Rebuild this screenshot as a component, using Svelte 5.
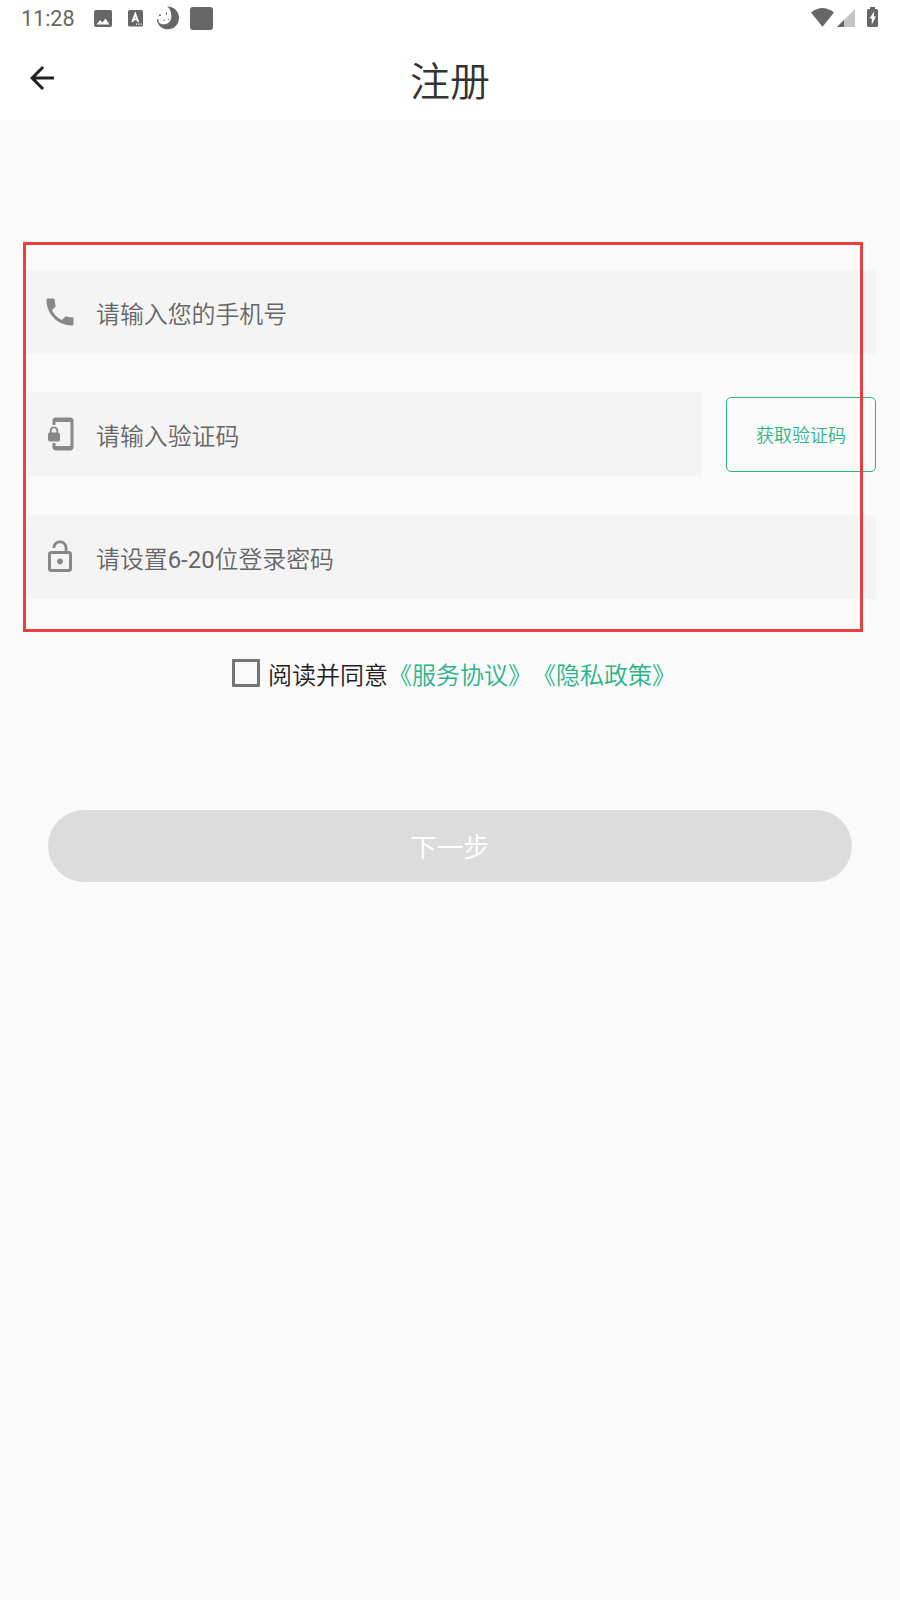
<script>
  const time = '11:28';

  let phone = '';
  let code = '';
  let password = '';
  let agreed = false;
</script>

<div class="screen">
  <header>
    <div class="status-bar">
      <span class="time">{time}</span>
      <div class="notifications">
        <svg class="image-icon" width="18" height="18" viewBox="0 0 18 18">
          <path fill="#666" fill-rule="evenodd" d="M2 0h14a2 2 0 0 1 2 2v13a2 2 0 0 1-2 2H2a2 2 0 0 1-2-2V2a2 2 0 0 1 2-2zM2.500 14.500h13L11.500 8.500 8.500 12.500 6 10z" />
        </svg>
        <svg class="letter-icon" width="15" height="17" viewBox="0 0 15 17">
          <rect width="15" height="16.500" rx="1.500" fill="#666" />
          <path d="M4.300 12 7.300 4 10.300 12M5.400 9.400h3.800" fill="none" stroke="#fff" stroke-width="1.900" />
          <path d="M8 13.500h1.200v1.200H8zM10.300 13.500h1.200v1.200h-1.200zM12.600 13.500h1.200v1.200h-1.200z" fill="#fff" />
        </svg>
        <svg class="moon-icon" width="24" height="24" viewBox="0 0 24 24">
          <path d="M11 .5C18 .2 23 5.500 23 12S18 23.300 12 23.300C6.500 23.300 2 20 1 14.500c2.500 3.500 6 4.500 9 3.500 4-1.300 5.500-4.300 5.300-8.500C15.200 5 13.600 2 11 .5z" fill="#666" />
          <path d="M3 8.500h2v1.500H3zM10 6.500h1V9h-1zM7.500 13.500h1.500v1H7.500zM12 13h1v1h-1zM1 13h1.500v3H1z" fill="#666" />
          <path d="M2 14Q-.5 9 2.500 5.500" fill="none" stroke="#bbb" stroke-width=".6" stroke-dasharray="1 2" />
        </svg>
        <span class="app-badge"></span>
      </div>
      <div class="system">
        <svg class="wifi-icon" width="23" height="19" viewBox="0 0 23 19">
          <path d="M0 4.500Q11.500-4.500 23 4.500L11.500 18.700z" fill="#666" />
        </svg>
        <svg class="signal-icon" width="18" height="18" viewBox="0 0 18 18">
          <path d="M18 0v18H0z" fill="#c4c4c4" />
          <path d="M7 11v7H0z" fill="#666" />
        </svg>
        <svg class="battery-icon" width="11" height="20" viewBox="0 0 11 20">
          <path d="M3 0h5v2h1.500A1.500 1.500 0 0 1 11 3.500v15A1.500 1.500 0 0 1 9.500 20h-8A1.500 1.500 0 0 1 0 18.500v-15A1.500 1.500 0 0 1 1.500 2H3z" fill="#666" />
          <path d="M7 4.500 2.500 11.500h2.300v6L9 9.500H7z" fill="#fff" />
        </svg>
      </div>
    </div>
    <div class="title-bar">
      <button class="back" aria-label="返回">
        <svg width="36" height="36" viewBox="0 0 24 24">
          <path d="M20 11H7.830l5.590-5.590L12 4l-8 8 8 8 1.410-1.410L7.830 13H20v-2z" fill="#212121" />
        </svg>
      </button>
      <h1>注册</h1>
    </div>
  </header>

  <main>
    <form>
      <label class="field">
        <svg width="36" height="36" viewBox="0 0 24 24">
          <path d="M6.620 10.790c1.440 2.830 3.760 5.140 6.590 6.590l2.200-2.200c.27-.27.67-.36 1.020-.24 1.120.37 2.330.57 3.570.57.55 0 1 .45 1 1V20c0 .55-.45 1-1 1-9.390 0-17-7.610-17-17 0-.55.45-1 1-1h3.500c.55 0 1 .45 1 1 0 1.250.2 2.450.57 3.570.11.35.03.74-.25 1.020l-2.200 2.200z" />
        </svg>
        <input type="text" placeholder="请输入您的手机号" bind:value={phone} />
      </label>

      <div class="code-row">
        <label class="field">
          <svg width="36" height="36" viewBox="0 0 24 24">
            <path d="M19 1H9c-1.100 0-2 .9-2 2v3h2V4h10v16H9v-2H7v3c0 1.100.9 2 2 2h10c1.100 0 2-.9 2-2V3c0-1.100-.9-2-2-2zm-8.200 10V9.500C10.800 8.100 9.400 7 8 7S5.200 8.100 5.200 9.500V11c-.6 0-1.200.6-1.200 1.200v3.500c0 .7.6 1.300 1.200 1.300h5.500c.7 0 1.300-.6 1.300-1.200v-3.500c0-.7-.6-1.300-1.200-1.300zm-1.300 0h-3V9.500c0-.8.7-1.300 1.500-1.300s1.500.5 1.500 1.300V11z" />
          </svg>
          <input type="text" placeholder="请输入验证码" bind:value={code} />
        </label>
        <button type="button" class="get-code">获取验证码</button>
      </div>

      <label class="field password">
        <svg width="36" height="36" viewBox="0 0 24 24">
          <path d="M12 17c1.100 0 2-.9 2-2s-.9-2-2-2-2 .9-2 2 .9 2 2 2zm6-9h-1V6c0-2.760-2.240-5-5-5S7 3.240 7 6h1.900c0-1.710 1.390-3.100 3.100-3.100s3.100 1.390 3.100 3.100v2H6c-1.100 0-2 .9-2 2v10c0 1.100.9 2 2 2h12c1.100 0 2-.9 2-2V10c0-1.100-.9-2-2-2zm0 12H6V10h12v10z" />
        </svg>
        <input type="text" placeholder="请设置6-20位登录密码" bind:value={password} />
      </label>

      <div class="highlight"></div>
    </form>

    <div class="agreement">
      <input type="checkbox" aria-label="阅读并同意" bind:checked={agreed} />
      <span>阅读并同意</span><span class="link">《服务协议》</span><span class="link">《隐私政策》</span>
    </div>

    <button class="next">下一步</button>
  </main>
</div>

<style>
  :global(body) {
    background: #fafafa;
  }

  .screen {
    min-height: 1600px;
    background: #fafafa;
    color: #212121;
    font-family: Roboto, 'Noto Sans CJK SC', sans-serif;
    font-size: 24px;
    font-weight: 350;
  }

  button,
  input {
    font-family: inherit;
    font-weight: inherit;
    margin: 0;
    padding: 0;
  }

  svg {
    display: block;
    flex: none;
  }

  header {
    height: 120px;
    background: #fff;
  }

  .status-bar {
    display: flex;
    height: 36px;
    padding: 0 22px 0 21px;
  }

  .time {
    width: 72px;
    color: #666;
    font-size: 21.500px;
    font-weight: 450;
    line-height: 38px;
  }

  .notifications {
    display: flex;
  }

  .image-icon {
    margin: 10px 0 0 .5px;
  }

  .letter-icon {
    margin: 10px 0 0 16.500px;
  }

  .moon-icon {
    margin: 6px 0 0 13px;
  }

  .app-badge {
    width: 23px;
    height: 23px;
    margin: 7px 0 0 10px;
    border-radius: 3px;
    background: #666;
  }

  .system {
    display: flex;
    margin-left: auto;
  }

  .wifi-icon {
    margin-top: 8px;
  }

  .signal-icon {
    margin: 9px 0 0 3px;
  }

  .battery-icon {
    margin: 7px 0 0 12px;
  }

  .title-bar {
    display: grid;
    grid-template-columns: 84px 1fr 84px;
    height: 84px;
  }

  .back {
    display: flex;
    align-items: center;
    padding-left: 24px;
    padding-bottom: 0;
    height: 84px;
    box-sizing: border-box;
    border: none;
    background: none;
  }

  h1 {
    margin: 0;
    color: #333;
    font-size: 40px;
    font-weight: 350;
    line-height: 93px;
    text-align: center;
  }

  form {
    position: relative;
    display: flex;
    flex-direction: column;
    gap: 38.400px;
    padding: 150px 24px 0;
  }

  .field {
    display: flex;
    align-items: center;
    box-sizing: border-box;
    height: 84px;
    padding: 0 18px;
    background: #f4f4f4;
  }

  .field svg {
    fill: #888;
  }

  .field input {
    flex: 1;
    min-width: 0;
    height: 84px;
    margin: 5px 0 0 18px;
    border: none;
    outline: none;
    background: none;
    font-size: 23.900px;
  }

  .field input::placeholder {
    color: #666;
    opacity: 1;
  }

  .password input {
    margin-top: 6px;
    font-family: Roboto, 'Noto Sans CJK SC DemiLight', 'Noto Sans CJK SC', sans-serif;
    font-weight: 400;
  }

  .code-row {
    display: flex;
    align-items: center;
    gap: 24px;
  }

  .code-row .field {
    flex: 1;
  }

  .get-code {
    box-sizing: border-box;
    width: 150px;
    height: 75px;
    border: 1px solid #2bb388;
    border-radius: 5px;
    background: none;
    color: #2bb388;
    font-size: 18px;
  }

  /* red marker frame drawn over the three inputs */
  .highlight {
    position: absolute;
    top: 122px;
    left: 23px;
    box-sizing: border-box;
    width: 840px;
    height: 390px;
    border: 3px solid #e84040;
    pointer-events: none;
  }

  .agreement {
    display: flex;
    align-items: center;
    justify-content: center;
    height: 36px;
    margin-top: 57px;
    padding-left: 8px;
    font-size: 24px;
  }

  .agreement input {
    appearance: none;
    width: 28px;
    height: 28px;
    margin: -1px 8px 0 0;
    border: 3px solid #757575;
    border-radius: 1px;
  }

  .link {
    color: #2bb388;
  }

  .next {
    display: block;
    width: 804px;
    height: 72px;
    margin: 118px auto 0;
    border: none;
    border-radius: 36px;
    background: #dcdcdc;
    color: #fff;
    font-size: 26.700px;
  }
</style>
